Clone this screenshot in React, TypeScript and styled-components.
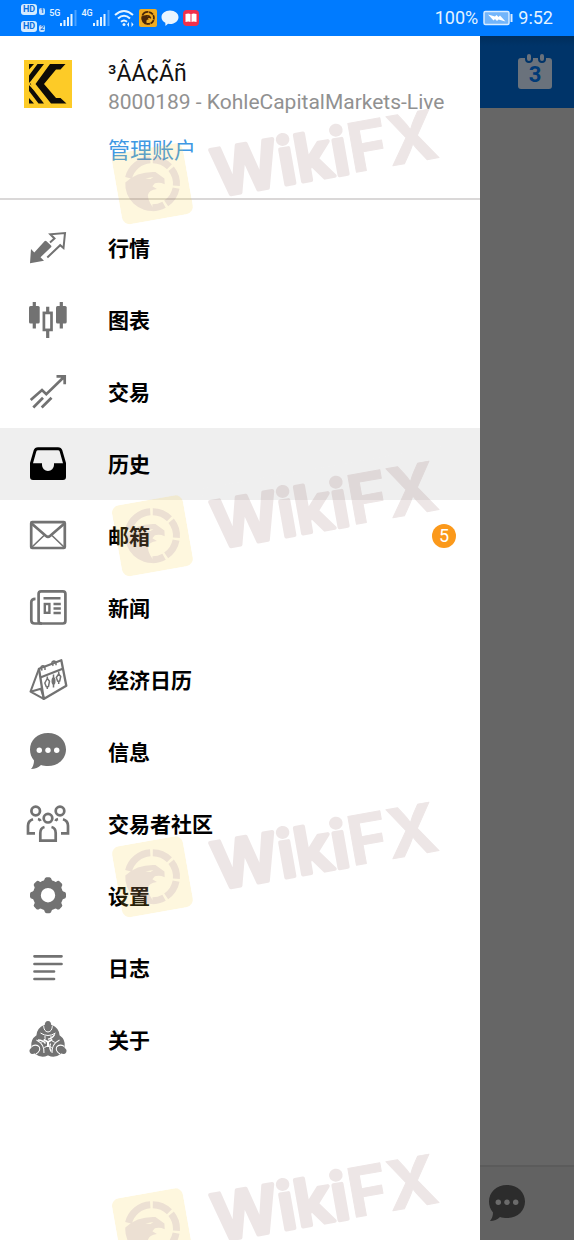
import React from "react";
import styled, { createGlobalStyle } from "styled-components";

const latin = `Roboto, "Noto Sans CJK SC", sans-serif`;

const GlobalStyle = createGlobalStyle`
  *, *::before, *::after { box-sizing: border-box; }
  body { margin: 0; background: #fff; font-family: ${latin}; }
`;

const Screen = styled.div`
  position: relative;
  display: flex;
  flex-direction: column;
  min-height: 100vh;
  overflow: hidden;
`;

/* ---------- status bar ---------- */

const StatusBar = styled.header`
  display: flex;
  align-items: center;
  justify-content: space-between;
  height: 36px;
  padding: 0 21px;
  background: #007bff;
  color: #e4f3ff;
`;

const StatusGroup = styled.div<{ $gap: number }>`
  display: flex;
  align-items: center;
  gap: ${(p) => p.$gap}px;
  font-size: 18px;
  line-height: 22px;
`;

const SimStack = styled.div`
  display: flex;
  flex-direction: column;
  gap: 6px;
`;

const SimLine = styled.div`
  display: flex;
  align-items: flex-end;
  gap: 2px;
`;

const HdTag = styled.span`
  padding: 0 2px;
  border-radius: 3px;
  background: #d5ebff;
  color: #0a6fe0;
  font-size: 9px;
  font-weight: 700;
  line-height: 11px;
`;

const SimNumber = styled.span`
  width: 6px;
  border-radius: 2px;
  background: #c3e1ff;
  color: #0a6fe0;
  font-size: 7px;
  font-weight: 700;
  line-height: 7px;
  text-align: center;
`;

const Signal = styled.div`
  display: flex;
  align-items: flex-start;
  height: 18px;

  svg { align-self: flex-end; }
`;

const Generation = styled.span`
  font-size: 9px;
  font-weight: 500;
  line-height: 9px;
`;

/* ---------- layout ---------- */

const Body = styled.div`
  display: flex;
  flex: 1;
`;

const Drawer = styled.aside`
  width: min(480px, 84%);
  background: #fff;
`;

const Account = styled.section`
  display: flex;
  gap: 36px;
  min-height: 164px;
  padding: 24px;
  border-bottom: 2px solid #dad8d8;
`;

const AccountText = styled.div`
  display: flex;
  flex-direction: column;
  align-items: flex-start;
  white-space: nowrap;
`;

const Name = styled.h1`
  margin: 0;
  color: #111;
  font-size: 23px;
  font-weight: 400;
  line-height: 28px;
`;

const Login = styled.p`
  margin: 0;
  color: #919191;
  font-size: 21px;
  line-height: 28px;
`;

const ManageLink = styled.a`
  margin-top: 17px;
  color: #3f98e3;
  font-family: "Noto Sans CJK SC", sans-serif;
  font-size: 22px;
  line-height: 30px;
  text-decoration: none;
`;

const Menu = styled.ul`
  margin: 0;
  padding: 12px 0;
  list-style: none;
`;

const MenuButton = styled.button<{ $active: boolean }>`
  display: flex;
  align-items: center;
  gap: 36px;
  width: 100%;
  height: 72px;
  padding: 0 24px;
  border: 0;
  background: ${(p) => (p.$active ? "#efefef" : "transparent")};
  color: ${(p) => (p.$active ? "#000" : "#727272")};
  text-align: left;
`;

const MenuLabel = styled.span`
  flex: 1;
  padding-bottom: 2px;
  color: #000;
  font-family: "Noto Sans CJK SC", sans-serif;
  font-size: 21px;
  font-weight: 700;
  line-height: 30px;
`;

const Badge = styled.span`
  width: 24px;
  height: 24px;
  border-radius: 50%;
  background: #fb991b;
  color: #fff;
  font-family: ${latin};
  font-size: 18px;
  line-height: 24px;
  text-align: center;
`;

const Backdrop = styled.main`
  display: flex;
  flex: 1;
  flex-direction: column;
  justify-content: space-between;
  background: #666;
`;

const Toolbar = styled.div`
  display: flex;
  align-items: center;
  justify-content: flex-end;
  height: 72px;
  padding: 0 21px;
  background: linear-gradient(#002e5c, #003469 10px);
`;

const BottomBar = styled.div`
  display: flex;
  align-items: center;
  height: 75px;
  padding: 0 3px;
  border-top: 2px solid #5b5b5b;
  background: #626262;
`;

const IconButton = styled.button`
  display: flex;
  padding: 0;
  border: 0;
  background: none;
  color: #2c2c2c;
`;

/* ---------- watermark ---------- */

const Watermark = styled.div<{ $top: number }>`
  position: absolute;
  top: ${(p) => p.$top}px;
  left: 117px;
  display: flex;
  align-items: center;
  gap: 20px;
  transform: rotate(-10deg);
  transform-origin: 0 50%;
  pointer-events: none;
`;

/* ---------- drawings ---------- */

const Icon = ({ children }: { children: React.ReactNode }) => (
  <svg width="48" height="48" viewBox="0 0 48 48" fill="none" stroke="currentColor" strokeWidth="2.7" aria-hidden="true">
    {children}
  </svg>
);

const QuotesIcon = () => (
  <Icon>
    <path d="M6 39.200 7 25l3.300 3.400L20.500 17.200q1-1 2 0l4.500 4.300q.8 1 0 1.800L16.500 33.200l3.500 3.500z" fill="currentColor" stroke="none" />
    <path d="M26 18.500 30.500 14.500 26.300 10.300 41 9 39.500 24 36.200 21.200 23.300 33.500" strokeWidth="2" />
  </Icon>
);

const ChartIcon = () => (
  <Icon>
    <path d="M10.300 6v26.500M37.300 6v26.500M23.700 10.700v6M23.700 34v8" strokeWidth="3.200" />
    <rect x="5" y="10" width="10.700" height="17.500" rx="1.500" fill="currentColor" stroke="none" />
    <rect x="32" y="10" width="10.700" height="17.500" rx="1.500" fill="currentColor" stroke="none" />
    <rect x="19.900" y="16.900" width="7.600" height="17" />
  </Icon>
);

const TradeIcon = () => (
  <Icon>
    <path d="M6.700 32 18 22l4.300 4.200L40.500 8.500M32.500 8.300h8.200v8M9.300 39.500l9.700-9.800M17.700 39.500l9.800-9.800" />
  </Icon>
);

const HistoryIcon = () => (
  <Icon>
    <path
      d="M14 7.300h20q3.300 0 4.300 3L42 23v14q0 3-3 3H9q-3 0-3-3V23l3.700-12.700q1-3 4.300-3zM14 10.300q-1.300 0-1.700 1.200L9 23.300h9V25a6 6 0 0 0 12 0v-1.700h9l-3.300-11.800q-.4-1.200-1.700-1.200z"
      fill="currentColor"
      fillRule="evenodd"
      stroke="none"
    />
  </Icon>
);

const MailIcon = () => (
  <Icon>
    <rect x="7.200" y="10.200" width="33.600" height="25.800" rx="1" />
    <path d="M7 11 22 24q2 1.700 4 0L41 11" />
    <path d="m7.500 35.500 12.500-12M40.500 35.500 28 23.500" strokeWidth="1.600" />
  </Icon>
);

const NewsIcon = () => (
  <Icon>
    <rect x="14.600" y="7.300" width="26.800" height="32.200" rx="2.500" />
    <path d="M11.500 14.800q-4.200 0-4.200 3.500v18q0 3.200 3.500 3.200H18" />
    <path d="M19.500 14.300h17M29.500 20h7.300M29.500 24.500h7.300M29.500 29h7.300" strokeWidth="2.400" />
    <rect x="20.800" y="20" width="4.600" height="8.800" strokeWidth="2.400" />
  </Icon>
);

const CalendarIcon = () => (
  <Icon>
    <g strokeWidth="2.300" strokeLinejoin="round">
      <path d="m15 12.700 22.300-8.500 5 25.500-22.600 13.200z" />
      <path d="M15 12.700 6.500 35.700l13.200 7.200M6.500 35.700l10.300-2.900 3 9M16.300 21.500l23-9" strokeWidth="2" />
      <path d="M18.300 14.500q-3-4 .5-4.700 2.500 0 2.200 4.200M29.300 9.700q-3-4 .5-4.700 2.500 0 2.200 4.200" strokeWidth="1.500" />
      <path d="M23.300 20.500v2m0 8v2.500M29.500 18.500v13M34.700 15.500v2.500m0 7v3" strokeWidth="1.500" />
      <path d="m23.300 22.500 2.200 2.700-1 5.300-2.200.2-1.500-3.700zM34.700 18l2 2.500-1 4.500-2 .2-1.400-3.700z" strokeWidth="1.500" />
      <ellipse cx="29.500" cy="25" rx="2" ry="3.800" fill="currentColor" stroke="none" />
    </g>
  </Icon>
);

const MessageIcon = ({ dots = "#fff" }: { dots?: string }) => (
  <Icon>
    <path
      d="M24 5c10.500 0 18 7.300 18 16.500S34.500 38 24 38c-2.500 0-5-.4-7-1.100C14.500 39.500 11 41 7 41c2.200-2.500 3-5.500 3-8.500-2.600-3-4-6.800-4-11C6 12.300 13.500 5 24 5z"
      fill="currentColor"
      stroke="none"
    />
    <g fill={dots} stroke="none">
      <circle cx="15.300" cy="22.300" r="2.700" />
      <circle cx="24" cy="22.300" r="2.700" />
      <circle cx="32.700" cy="22.300" r="2.700" />
    </g>
  </Icon>
);

const CommunityIcon = () => (
  <Icon>
    <circle cx="11.700" cy="11" r="4.300" />
    <circle cx="36" cy="11" r="4.300" />
    <circle cx="24" cy="18.200" r="4.300" />
    <path d="M9 19.300q-5 1.500-5 6.500v7.500h7M39 19.300q5 1.500 5 6.500v7.500h-7" />
    <path d="M14 19q2 .5 2.500 2M34 19q-2 .5-2.500 2" />
    <path d="M20.500 27q-4.200 1-4.200 6v7.700h15.400V33q0-5-4.200-6" />
  </Icon>
);

const SettingsIcon = () => (
  <Icon>
    <circle cx="24" cy="23.200" r="11.200" strokeWidth="8" />
    {[0, 45, 90, 135, 180, 225, 270, 315].map((angle) => (
      <path
        key={angle}
        d="M18 10.500q2-.8 2.300-2.700.4-2.600 2.200-2.600h3q1.800 0 2.200 2.600.3 1.900 2.300 2.700z"
        fill="currentColor"
        stroke="none"
        transform={`rotate(${angle} 24 23.200)`}
      />
    ))}
  </Icon>
);

const JournalIcon = () => (
  <Icon>
    <path d="M10.500 12.300h27M10.500 20h27M10.500 27.500h19.500M10.500 35h19.500" strokeLinecap="round" />
  </Icon>
);

const AboutIcon = () => (
  <Icon>
    {[0, 120, 240].map((angle) => (
      <g key={angle} transform={`rotate(${angle} 24 26)`}>
        <path d="M20 9q-7 3-7.500 10-.2 3 2.500 4.500 4 2 9 1.500 5 .5 9-1.500 2.700-1.500 2.500-4.500Q35 12 28 9z" fill="currentColor" stroke="none" />
        <path d="M19.700 9.500q0 6 4.300 6.500 4.300-.5 4.300-6.500M16.500 17q7.500 5 15 0M21 20v3m6-3v3" stroke="#fff" strokeWidth="1" />
        <ellipse cx="24" cy="9.800" rx="3.300" ry="4.700" fill="currentColor" stroke="none" />
      </g>
    ))}
    {[0, 120, 240].map((angle) => (
      <path key={angle} d="M14 24q5 0 7.500 3.500" stroke="#fff" strokeWidth="1.300" transform={`rotate(${angle} 24 26)`} />
    ))}
    <path d="M24 26v5M24 26l-4.300-2.500M24 26l4.300-2.500" stroke="#fff" strokeWidth="2" />
  </Icon>
);

const BrokerLogo = () => (
  <svg width="48" height="48" viewBox="0 0 48 48" role="img" aria-label="Kohle Capital Markets">
    <path fill="#fdcb27" d="M0 0h48v48H0z" />
    <path
      fill="#0d0b08"
      d="M5 4h5L5 9.500zM13.500 4H20L8 19.500q-2 4 0 8.500l12 15.500h-5.500L5 31V15.500zM26 4h15.500l-5 5.500h-4.500L20 24l12 14h4.500l6 5.500H27L11.500 24zM5 38l5 5.500H5z"
    />
    <path d="M10 19 5 24l5 5" fill="none" stroke="#fdcb27" strokeWidth="1.500" />
  </svg>
);

type EagleProps = { size: number; ground: string; groundOpacity?: number; ink: string; inkOpacity?: number };

const EagleMark = ({ size, ground, groundOpacity = 1, ink, inkOpacity = 1 }: EagleProps) => (
  <svg width={size} height={size} viewBox="0 0 72 72" aria-hidden="true">
    <rect width="72" height="72" rx="8" fill={ground} opacity={groundOpacity} />
    <g opacity={inkOpacity}>
      <path
        d="M13.500 26A24 24 0 0 1 38 12M40.500 12.400A24 24 0 0 1 55.700 22.200M57 24.500A24 24 0 0 1 59.200 42.200M58.500 44.500A24 24 0 0 1 46.100 57.800M43.800 58.700A24 24 0 0 1 31.800 59.600"
        fill="none"
        stroke={ink}
        strokeWidth="7"
      />
      <path
        fill={ink}
        fillRule="evenodd"
        d="M9.500 30q14-9 31.500-5l7.700 8-.7 5.500q-5-3-9.500-2.500l-3 2.500 4 3.500q-8-.5-10 4.500-1 7 5 16.500A26.500 26.500 0 0 1 9.500 30zM30 29.500l5 1.500 3-1.500z"
      />
    </g>
  </svg>
);

const WatermarkWord = () => (
  <svg width="250" height="76" viewBox="0 0 250 76">
    <g opacity="0.15" fill="#875858" stroke="#875858" fontFamily="Inter, sans-serif" strokeLinejoin="round">
      <text x="5" y="62">
        <tspan fontSize="65" fontWeight="600" strokeWidth="4">
          Wiki
        </tspan>
        <tspan fontSize="68" fontWeight="700" strokeWidth="1">
          FX
        </tspan>
      </text>
    </g>
  </svg>
);

const SignalBars = () => (
  <svg width="17" height="17" viewBox="0 0 17 17" aria-hidden="true">
    <path d="M1 13v3M4.500 10v6M8 7v9M11.500 4v12" stroke="#e4f3ff" strokeWidth="2" />
    <path d="M15.500 0v16" stroke="#4ba3ff" strokeWidth="2" />
  </svg>
);

const WifiIcon = () => (
  <svg width="21" height="18" viewBox="0 0 21 18" fill="none" stroke="#e4f3ff" strokeWidth="2" aria-hidden="true">
    <path d="M1 6q9-8 18 0M4 9.500q6-5.500 12 0M7 12.700q3-2.500 6 0" />
    <circle cx="10" cy="15.500" r="1.500" fill="#e4f3ff" stroke="none" />
    <path d="m15 13-2 2.500 2 2.500zM17.500 13l2 2.500-2 2.500z" fill="#e4f3ff" stroke="none" />
  </svg>
);

const ChatIcon = () => (
  <svg width="18" height="18" viewBox="0 0 18 18" aria-hidden="true">
    <path d="M9 1.500c5 0 8.500 3 8.500 6.700S14 15 9 15l-2-.2L4.500 17l-.2-3.200C2 12.700.5 10.700.5 8.200.5 4.500 4 1.500 9 1.500z" fill="#e9f5ff" />
  </svg>
);

const BookIcon = () => (
  <svg width="16" height="16" viewBox="0 0 16 16" aria-hidden="true">
    <rect width="16" height="16" rx="4" fill="#f0304c" />
    <path d="M2.500 4q3-1 5 0v8q-2-1-5 0zM8.500 4q2-1 5 0v8q-3-1-5 0z" fill="#fff" />
  </svg>
);

const BatteryIcon = () => (
  <svg width="30" height="16" viewBox="0 0 30 16" aria-hidden="true">
    <rect x="1" y="1.500" width="25" height="13" rx="1.500" fill="#72b5fb" stroke="#d8ecff" strokeWidth="1.500" />
    <path d="M28.500 4v8" stroke="#d8ecff" strokeWidth="2" />
    <path d="m5 4.500 7 2 1.500-1.500 2 2 1.500-1.500 5.500 6-7-2-1.500 1.500-2-2-1.500 1.500z" fill="#fff" />
  </svg>
);

const DateIcon = () => (
  <svg width="36" height="42" viewBox="0 0 36 42" aria-hidden="true">
    <rect x="1" y="7" width="34" height="31" rx="3" fill="#6a727c" />
    <g fill="#6a727c" stroke="#003469" strokeWidth="2">
      <rect x="9" y="2" width="6" height="9" rx="3" />
      <rect x="22" y="2" width="6" height="9" rx="3" />
    </g>
    <text x="18" y="31" textAnchor="middle" fill="#003a77" fontFamily="Roboto, sans-serif" fontSize="22" fontWeight="700">
      3
    </text>
  </svg>
);

/* ---------- page ---------- */

type MenuItem = { label: string; icon: React.ReactNode; active?: boolean; count?: number };

const items: MenuItem[] = [
  { label: "行情", icon: <QuotesIcon /> },
  { label: "图表", icon: <ChartIcon /> },
  { label: "交易", icon: <TradeIcon /> },
  { label: "历史", icon: <HistoryIcon />, active: true },
  { label: "邮箱", icon: <MailIcon />, count: 5 },
  { label: "新闻", icon: <NewsIcon /> },
  { label: "经济日历", icon: <CalendarIcon /> },
  { label: "信息", icon: <MessageIcon /> },
  { label: "交易者社区", icon: <CommunityIcon /> },
  { label: "设置", icon: <SettingsIcon /> },
  { label: "日志", icon: <JournalIcon /> },
  { label: "关于", icon: <AboutIcon /> },
];

const watermarkTops = [152, 504, 845, 1197];

export default function App() {
  return (
    <Screen>
      <GlobalStyle />
      <StatusBar>
        <StatusGroup $gap={4}>
          <SimStack>
            {[1, 2].map((n) => (
              <SimLine key={n}>
                <HdTag>HD</HdTag>
                <SimNumber>{n}</SimNumber>
              </SimLine>
            ))}
          </SimStack>
          {["5G", "4G"].map((g) => (
            <Signal key={g}>
              <Generation>{g}</Generation>
              <SignalBars />
            </Signal>
          ))}
          <WifiIcon />
          <EagleMark size={18} ground="#f0ac22" ink="#4a2708" />
          <ChatIcon />
          <BookIcon />
        </StatusGroup>
        <StatusGroup $gap={5}>
          <span>100%</span>
          <BatteryIcon />
          <time>9:52</time>
        </StatusGroup>
      </StatusBar>

      <Body>
        <Drawer>
          <Account>
            <BrokerLogo />
            <AccountText>
              <Name>³ÂÁ¢Ãñ</Name>
              <Login>8000189 - KohleCapitalMarkets-Live</Login>
              <ManageLink href="#accounts">管理账户</ManageLink>
            </AccountText>
          </Account>
          <nav>
            <Menu>
              {items.map((item) => (
                <li key={item.label}>
                  <MenuButton type="button" $active={!!item.active} aria-current={item.active ? "page" : undefined}>
                    {item.icon}
                    <MenuLabel>{item.label}</MenuLabel>
                    {item.count !== undefined && <Badge>{item.count}</Badge>}
                  </MenuButton>
                </li>
              ))}
            </Menu>
          </nav>
        </Drawer>
        <Backdrop>
          <Toolbar>
            <IconButton type="button" aria-label="日期">
              <DateIcon />
            </IconButton>
          </Toolbar>
          <BottomBar>
            <IconButton type="button" aria-label="信息">
              <MessageIcon dots="#6b6b6b" />
            </IconButton>
          </BottomBar>
        </Backdrop>
      </Body>

      {watermarkTops.map((top) => (
        <Watermark key={top} $top={top} aria-hidden="true">
          <EagleMark size={72} ground="#facd3c" groundOpacity={0.17} ink="#6e3c82" inkOpacity={0.12} />
          <WatermarkWord />
        </Watermark>
      ))}
    </Screen>
  );
}
